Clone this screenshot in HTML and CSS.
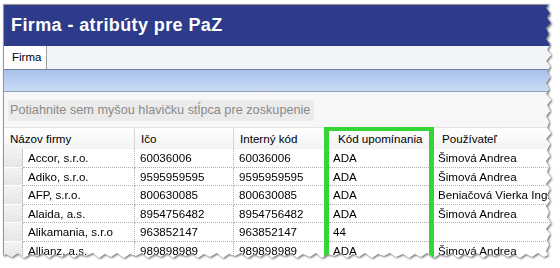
FILE: index.html
```html
<!DOCTYPE html>
<html lang="sk">
<head>
<meta charset="utf-8">
<title>Firma - atribúty pre PaZ</title>
<link rel="stylesheet" href="styles.css">
</head>
<body>
<div class="page">
  <div class="shadow">
    <div class="win">
      <div class="title">Firma - atribúty pre PaZ</div>
      <div class="tabs"><div class="tab">Firma</div></div>
      <div class="bluebar"></div>
      <div class="group"><div class="groupbox">Potiahnite sem myšou hlavičku stĺpca pre zoskupenie</div></div>
      <div class="grid">
        <div class="hdr">
          <div class="hc">Názov firmy</div>
          <div class="hc">Ičo</div>
          <div class="hc">Interný kód</div>
          <div class="hc hk">Kód upomínania</div>
          <div class="hc hu">Používateľ</div>
        </div>
        <div class="row"><div class="ind"></div><div class="c">Accor, s.r.o.</div><div class="c">60036006</div><div class="c">60036006</div><div class="c ck">ADA</div><div class="c">Šimová Andrea</div></div>
        <div class="row"><div class="ind"></div><div class="c">Adiko, s.r.o.</div><div class="c">9595959595</div><div class="c">9595959595</div><div class="c ck">ADA</div><div class="c">Šimová Andrea</div></div>
        <div class="row"><div class="ind"></div><div class="c">AFP, s.r.o.</div><div class="c">800630085</div><div class="c">800630085</div><div class="c ck">ADA</div><div class="c">Beniačová Vierka Ing.</div></div>
        <div class="row"><div class="ind"></div><div class="c">Alaida, a.s.</div><div class="c">8954756482</div><div class="c">8954756482</div><div class="c ck">ADA</div><div class="c">Šimová Andrea</div></div>
        <div class="row"><div class="ind"></div><div class="c">Alikamania, s.r.o</div><div class="c">963852147</div><div class="c">963852147</div><div class="c ck">44</div><div class="c"></div></div>
        <div class="row"><div class="ind"></div><div class="c">Allianz, a.s.</div><div class="c">989898989</div><div class="c">989898989</div><div class="c ck">ADA</div><div class="c">Šimová Andrea</div></div>
      </div>
      <div class="hl"></div>
    </div>
  </div>
</div>
</body>
</html>
```
FILE: styles.css
```css
* { box-sizing: border-box; }
html, body { margin: 0; padding: 0; background: #ffffff; }
body { width: 560px; height: 268px; overflow: hidden; font-family: "Liberation Sans", Arial, sans-serif; }

.page { padding: 4px 0 0 3px; }
.shadow { filter: drop-shadow(1px 1px 1.2px rgba(0,0,0,0.6)); width: 549px; }

.win {
  position: relative;
  width: 549px;
  height: 256px;
  overflow: hidden;
  background: #ffffff;
  border-top: 1px solid #9a9a9a;
  border-left: 1px solid #9a9a9a;
  clip-path: polygon(0 0, 546px 0, 543px 4px, 547px 9px, 544px 14px, 548px 19px, 543px 24px, 546px 30px, 543px 35px, 547px 40px, 544px 46px, 548px 51px, 543px 57px, 547px 62px, 544px 68px, 547px 73px, 543px 79px, 546px 85px, 543px 90px, 548px 96px, 544px 101px, 547px 107px, 543px 112px, 546px 118px, 544px 124px, 548px 129px, 543px 135px, 547px 140px, 544px 146px, 547px 152px, 543px 157px, 546px 163px, 544px 168px, 548px 174px, 543px 180px, 547px 185px, 544px 191px, 547px 197px, 543px 202px, 546px 208px, 544px 213px, 548px 219px, 543px 225px, 547px 230px, 544px 236px, 546px 241px, 543px 247px, 545px 251px,
    541px 253px, 535px 249px, 529px 253px, 523px 250px, 517px 254px, 511px 250px, 505px 253px, 498px 249px, 492px 252px, 486px 250px, 480px 254px, 474px 249px, 468px 253px, 461px 250px, 455px 254px, 449px 249px, 443px 252px, 437px 250px, 431px 254px, 424px 249px, 418px 253px, 412px 250px, 406px 254px, 400px 250px, 393px 253px, 387px 249px, 381px 252px, 375px 250px, 369px 254px, 362px 249px, 356px 253px, 350px 250px, 344px 254px, 338px 249px, 331px 252px, 325px 250px, 319px 254px, 313px 249px, 307px 253px, 300px 250px, 294px 254px, 288px 249px, 282px 252px, 276px 250px, 269px 254px, 263px 249px, 257px 253px, 251px 250px, 245px 254px, 238px 249px, 232px 252px, 226px 250px, 220px 254px, 214px 249px, 207px 253px, 201px 250px, 195px 254px, 189px 249px, 183px 252px, 176px 250px, 170px 254px, 164px 249px, 158px 253px, 152px 250px, 145px 254px, 139px 249px, 133px 252px, 127px 250px, 121px 254px, 114px 249px, 108px 253px, 102px 250px, 96px 254px, 90px 249px, 83px 252px, 77px 250px, 71px 254px, 65px 249px, 59px 253px, 52px 250px, 46px 254px, 40px 249px, 34px 252px, 28px 250px, 21px 254px, 15px 249px, 9px 253px, 3px 250px, 0 252px);
}

.title {
  height: 41px;
  background: #2e3b8b;
  color: #ffffff;
  font-weight: bold;
  font-size: 18px;
  line-height: 41px;
  padding-left: 7px;
  letter-spacing: 0.4px;
}

.tabs {
  height: 24px;
  background: #f1f4f9;
  border-bottom: 1px solid #70809e;
  display: flex;
}
.tab {
  width: 43px;
  height: 23px;
  background: #ffffff;
  border-right: 1px solid #a0a0a0;
  font-size: 11.5px;
  line-height: 23px;
  padding-left: 8px;
  color: #000000;
}

.bluebar {
  height: 22px;
  background: linear-gradient(#a7c0ec, #cbdbf4);
  border-bottom: 1px solid #8f9fbd;
}

.group {
  height: 35px;
  background: #f7f7f7;
  padding: 8px 0 0 4px;
}
.groupbox {
  width: 306px;
  height: 21px;
  background: #ebebeb;
  color: #8a8a8a;
  font-size: 12.7px;
  line-height: 21px;
  padding-left: 2px;
  white-space: nowrap;
}

.grid { font-size: 11.6px; color: #000; }

.hdr {
  display: grid;
  grid-template-columns: 131px 99px 95px 104px 1fr;
  height: 22px;
  background: linear-gradient(#ffffff, #f2f2f2);
  border-top: 1px solid #e4e4e4;
}
.hc {
  line-height: 21px;
  padding-left: 6px;
  border-right: 1px solid #d6d6d6;
  white-space: nowrap;
}
.hk { padding-left: 9px; }
.hu { padding-left: 9px; border-right: none; }

.row {
  display: grid;
  grid-template-columns: 19px 112px 99px 95px 104px 1fr;
  height: 18.5px;
}
.ind {
  background: linear-gradient(#f3f3f3, #e6e6e6);
  border-right: 1px dotted #a8a8a8;
  border-bottom: 1px solid #ffffff;
}
.c {
  line-height: 18px;
  padding-left: 5px;
  border-right: 1px dotted #b0b0b0;
  border-bottom: 1px dotted #b0b0b0;
  white-space: nowrap;
  overflow: hidden;
}
.ck { padding-left: 4px; }

.hl {
  position: absolute;
  left: 320px;
  top: 122px;
  width: 110px;
  height: 150px;
  border: 4px solid #35d535;
  border-width: 4px 5px 0 5px;
}
```
